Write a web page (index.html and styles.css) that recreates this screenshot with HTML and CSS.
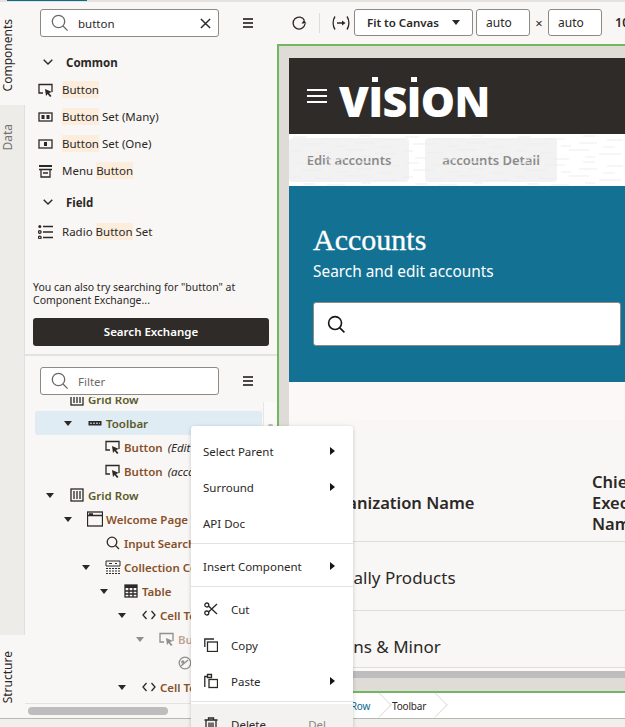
FILE: index.html
```html
<!DOCTYPE html>
<html lang="en">
<head>
  <meta charset="UTF-8">
  <title>Page Designer</title>
  <link rel="stylesheet" href="styles.css">
</head>
<body>
  <div class="app">
    <div class="topline"><div class="topline-blue"></div></div>
    <div class="main">
      <div class="left-panel">
        <div class="side-tabs">
          <div class="tab tab-on tab-components"><span>Components</span></div>
          <div class="tab tab-off tab-data"><span>Data</span></div>
          <div class="tab tab-on tab-structure"><span>Structure</span></div>
        </div>
        <div class="panels">
          <div class="palette">
            <div class="search-row">
              <div class="search-box">
                <svg class="search-icon" width="18" height="18" viewBox="0 0 18 18"><circle cx="7.5" cy="7.5" r="6.2"/><path d="M12 12l4.6 4.6"/></svg>
                <span class="search-text">button</span>
                <svg class="clear-icon" width="11" height="11" viewBox="0 0 12 12"><path d="M1 1l10 10M11 1L1 11"/></svg>
              </div>
              <div class="burger"><i></i><i></i><i></i></div>
            </div>
            <div class="group-head">
              <svg width="10" height="6" viewBox="0 0 10 6"><path d="M.7.7L5 5l4.3-4.3"/></svg>
              <span>Common</span>
            </div>
            <div class="pal-item">
              <svg class="ico" width="16" height="14" viewBox="0 0 16 14"><path d="M5 10H1V1.5h13V9"/><path class="solid" d="M7 6l7 3-3 1 2.5 3-1.5 1-2.3-3L8 13z"/></svg>
              <span><mark>Button</mark></span>
            </div>
            <div class="pal-item">
              <svg class="ico" width="16" height="14" viewBox="0 0 16 14"><rect x="1" y="3" width="13" height="8"/><path class="solid" d="M3.5 5h3v4h-3zM8.500 5h3v4h-3z"/></svg>
              <span><mark>Button</mark> Set (Many)</span>
            </div>
            <div class="pal-item">
              <svg class="ico" width="16" height="14" viewBox="0 0 16 14"><rect x="1" y="3" width="13" height="8"/><path class="solid" d="M6 5h3v4H6z"/></svg>
              <span><mark>Button</mark> Set (One)</span>
            </div>
            <div class="pal-item">
              <svg class="ico" width="16" height="14" viewBox="0 0 16 14"><path class="solid" d="M1 1h13v2H1z"/><path d="M1 5.500h13M3 5.500V13h9V5.500M5 9h5"/></svg>
              <span>Menu <mark>Button</mark></span>
            </div>
            <div class="group-head group-field">
              <svg width="10" height="6" viewBox="0 0 10 6"><path d="M.7.7L5 5l4.3-4.3"/></svg>
              <span>Field</span>
            </div>
            <div class="pal-item">
              <svg class="ico" width="16" height="14" viewBox="0 0 16 14"><path d="M5 1.500h10M5 7h10M5 12.500h10"/><circle class="solid" cx="1.800" cy="1.500" r="1.500"/><circle cx="1.800" cy="7" r="1.300"/><circle cx="1.800" cy="12.500" r="1.300"/></svg>
              <span>Radio <mark>Button</mark> Set</span>
            </div>
            <p class="hint">You can also try searching for "button" at Component Exchange...</p>
            <div class="exchange-btn">Search Exchange</div>
          </div>
          <div class="structure">
            <div class="search-row filter-row">
              <div class="search-box">
                <svg class="search-icon" width="18" height="18" viewBox="0 0 18 18"><circle cx="7.5" cy="7.5" r="6.2"/><path d="M12 12l4.6 4.6"/></svg>
                <span class="search-text placeholder">Filter</span>
              </div>
              <div class="burger"><i></i><i></i><i></i></div>
            </div>
            <div class="tree">
              <div class="node node-cut d0 olive">
                <b class="caret caret-none"></b>
                <div class="slot"><svg class="ico" width="14" height="14" viewBox="0 0 14 14"><rect x="1" y="1" width="12" height="12"/><path d="M4 3v8M7 3v8M10 3v8"/></svg></div>
                <span>Grid Row</span>
              </div>
              <div class="node selected olive">
                <b class="caret"></b>
                <div class="slot"><svg class="ico" width="14" height="14" viewBox="0 0 14 14"><rect class="solid" x="0.500" y="5" width="13" height="4.500"/><path class="dots" d="M2 7.200h10"/></svg></div>
                <span>Toolbar</span>
              </div>
              <div class="node d2 brown">
                <b class="caret caret-none"></b>
                <div class="slot"><svg class="ico" width="16" height="14" viewBox="0 0 16 14"><path d="M5 10H1V1.500h13V9"/><path class="solid" d="M7 6l7 3-3 1 2.500 3-1.500 1-2.300-3L8 13z"/></svg></div>
                <span>Button</span><em>(Edit accounts)</em>
              </div>
              <div class="node d2 brown">
                <b class="caret caret-none"></b>
                <div class="slot"><svg class="ico" width="16" height="14" viewBox="0 0 16 14"><path d="M5 10H1V1.500h13V9"/><path class="solid" d="M7 6l7 3-3 1 2.500 3-1.500 1-2.300-3L8 13z"/></svg></div>
                <span>Button</span><em>(accounts Detail)</em>
              </div>
              <div class="node d0 olive">
                <b class="caret"></b>
                <div class="slot"><svg class="ico" width="14" height="14" viewBox="0 0 14 14"><rect x="1" y="1" width="12" height="12"/><path d="M4 3v8M7 3v8M10 3v8"/></svg></div>
                <span>Grid Row</span>
              </div>
              <div class="node d1 brown">
                <b class="caret"></b>
                <div class="slot"><svg class="ico" width="16" height="16" viewBox="0 0 16 16"><rect x="0.500" y="1" width="15" height="14"/><path d="M.5 4.500h15M2 3h4"/></svg></div>
                <span>Welcome Page Template</span>
              </div>
              <div class="node d2 brown">
                <b class="caret caret-none"></b>
                <div class="slot"><svg class="ico" width="14" height="14" viewBox="0 0 14 14"><circle cx="6" cy="6" r="4.800"/><path d="M9.500 9.500L13 13"/></svg></div>
                <span>Input Search</span>
              </div>
              <div class="node d2 brown">
                <b class="caret"></b>
                <div class="slot"><svg class="ico thin" width="16" height="14" viewBox="0 0 16 14"><path d="M1 1h14v5H1zM4 3.500h3M10 3.500h2"/><path stroke-dasharray="2 1" d="M1 8.500h14M1 11h14M1 13.500h14"/></svg></div>
                <span>Collection Container</span>
              </div>
              <div class="node d3 brown">
                <b class="caret"></b>
                <div class="slot"><svg class="ico" width="14" height="14" viewBox="0 0 14 14"><rect x="1" y="1" width="12" height="12"/><path class="solid" d="M1 1h12v3H1z"/><path d="M1 7h12M1 10h12M5 4v9M9 4v9"/></svg></div>
                <span>Table</span>
              </div>
              <div class="node d4 brown">
                <b class="caret"></b>
                <div class="slot"><svg class="ico" width="14" height="14" viewBox="0 0 14 14"><path d="M4.500 3L1 7l3.500 4M9.500 3L13 7l-3.500 4"/></svg></div>
                <span>Cell Template</span>
              </div>
              <div class="node d5 brown faded">
                <b class="caret"></b>
                <div class="slot"><svg class="ico" width="16" height="14" viewBox="0 0 16 14"><path d="M5 10H1V1.500h13V9"/><path class="solid" d="M7 6l7 3-3 1 2.500 3-1.500 1-2.300-3L8 13z"/></svg></div>
                <span>Button</span>
              </div>
              <div class="node d6 brown faded">
                <b class="caret caret-none"></b>
                <div class="slot"><svg class="ico" width="14" height="14" viewBox="0 0 14 14"><circle cx="7" cy="7" r="5.800"/><circle cx="4.800" cy="6" r="1"/><path d="M3 10l7-6"/></svg></div>
                <span>Icon</span>
              </div>
              <div class="node d4 brown">
                <b class="caret"></b>
                <div class="slot"><svg class="ico" width="14" height="14" viewBox="0 0 14 14"><path d="M4.500 3L1 7l3.500 4M9.500 3L13 7l-3.500 4"/></svg></div>
                <span>Cell Template</span>
              </div>
            </div>
            <div class="tree-vscroll"><div class="tree-vthumb"></div></div>
            <div class="tree-scroll"><div class="tree-thumb"></div></div>
          </div>
        </div>
      </div>
      <div class="right-panel">
        <div class="toolbar">
          <svg class="tool-icon" width="16" height="16" viewBox="0 0 16 16"><path d="M13.500 5.500A6 6 0 1 0 14 9"/><path class="solid" d="M10.500 8.500h5L13 5z"/></svg>
          <div class="tool-sep"></div>
          <svg class="tool-icon" width="18" height="16" viewBox="0 0 18 16"><path d="M3 1.500C.5 5 .5 11 3 14.500M15 1.500c2.500 3.500 2.500 9.500 0 13M5 8h7"/><path class="solid" d="M10 5.500L13.500 8 10 10.500z"/></svg>
          <div class="tool-select">Fit to Canvas <b class="caret"></b></div>
          <div class="tool-input">auto</div>
          <span class="times">×</span>
          <div class="tool-input">auto</div>
          <span class="zoom-value">100%</span>
        </div>
        <div class="canvas">
          <div class="preview">
            <div class="brand-bar">
              <div class="brand-burger"><i></i><i></i><i></i></div>
              <span class="brand-name">V<span class="brand-i">I</span>S<span class="brand-i">I</span>ON</span>
            </div>
            <div class="tabs-strip">
              <span class="tab-btn tab-edit">Edit accounts</span>
              <span class="tab-btn tab-detail">accounts Detail</span>
              <svg class="strip-noise" width="336" height="52">
                <defs>
                  <pattern id="noise" width="112" height="26" patternUnits="userSpaceOnUse">
                    <path d="M4 3h14M32 5h20M70 2h12M94 6h16M12 10h22M48 12h10M66 9h18M90 13h12M2 17h10M26 19h16M56 16h20M86 20h22M14 24h12M38 25h18M72 23h10"/>
                  </pattern>
                </defs>
                <rect width="336" height="52" fill="url(#noise)" stroke="none"/>
              </svg>
            </div>
            <div class="hero">
              <h1>Accounts</h1>
              <p>Search and edit accounts</p>
              <div class="hero-search">
                <svg width="19" height="19" viewBox="0 0 20 20"><circle cx="8.500" cy="8.500" r="6.800"/><path d="M13.500 13.500l4.800 4.800"/></svg>
              </div>
            </div>
            <div class="table">
              <div class="table-row head-row">
                <div class="col-org">Organization Name</div>
                <div class="col-ceo">Chief<br>Executive<br>Name</div>
              </div>
              <div class="table-row body-row"><div class="col-org">McNally Products</div></div>
              <div class="table-row body-row last-row"><div class="col-org">Owens &amp; Minor</div></div>
            </div>
          </div>
          <div class="canvas-scroll"></div>
        </div>
        <div class="crumbs">
          <span class="crumb link">Grid Row</span>
          <span class="crumb">Toolbar</span>
        </div>
      </div>
    </div>
    <div class="bottom-strip"></div>
  </div>
  <div class="menu">
    <div class="menu-item"><span>Select Parent</span><b class="arrow"></b></div>
    <div class="menu-item"><span>Surround</span><b class="arrow"></b></div>
    <div class="menu-item"><span>API Doc</span></div>
    <div class="menu-sep"></div>
    <div class="menu-item"><span>Insert Component</span><b class="arrow"></b></div>
    <div class="menu-sep"></div>
    <div class="menu-item has-icon">
      <svg width="14" height="14" viewBox="0 0 14 14"><circle cx="2.800" cy="3" r="2"/><circle cx="2.800" cy="11" r="2"/><path d="M4.500 4L13 12M4.500 10L13 2"/></svg>
      <span>Cut</span>
    </div>
    <div class="menu-item has-icon">
      <svg width="14" height="14" viewBox="0 0 14 14"><path d="M.8 9V1H10"/><rect x="3.500" y="4" width="10" height="9.500"/></svg>
      <span>Copy</span>
    </div>
    <div class="menu-item has-icon">
      <svg width="14" height="16" viewBox="0 0 14 16"><path d="M.8 14V3.500H3M3.500 1.500h4v3h-4z"/><rect x="5" y="6.500" width="8.500" height="8"/></svg>
      <span>Paste</span><b class="arrow"></b>
    </div>
    <div class="menu-sep menu-sep-last"></div>
    <div class="menu-item has-icon hovered">
      <svg width="14" height="14" viewBox="0 0 14 14"><path d="M.5 3h13M4.500 3V1h5v2M2 3v10.500h10V3M5 5.500v6M7 5.500v6M9 5.500v6"/></svg>
      <span>Delete</span><span class="shortcut">Del</span>
    </div>
  </div>
</body>
</html>
```

FILE: styles.css
```css
html, body {
  margin: 0;
  padding: 0;
  height: 100%;
  overflow: hidden;
}
body {
  font-family: 'Noto Sans', 'Open Sans', sans-serif;
  font-size: 11.5px;
  color: #2b2826;
  background: #f1efec;
  position: relative;
}
svg {
  display: block;
  flex: none;
  fill: none;
  stroke: currentColor;
  stroke-width: 1.3;
}
svg .solid {
  fill: currentColor;
  stroke: none;
}
.app {
  width: 625px;
  height: 727px;
  display: flex;
  flex-direction: column;
  overflow: hidden;
}
.topline {
  height: 2px;
  flex: none;
  background: #e4e2df;
}
.topline-blue {
  width: 80px;
  height: 1px;
  margin-left: 7px;
  background: #0e6a8c;
}
.main {
  flex: 1;
  display: flex;
  min-height: 0;
}
.bottom-strip {
  height: 9px;
  flex: none;
  box-sizing: border-box;
  background: #f1efec;
  border-top: 1px solid #b9b6b2;
}

/* left */
.left-panel {
  width: 277px;
  flex: none;
  display: flex;
}
.side-tabs {
  width: 25px;
  flex: none;
  box-sizing: border-box;
  display: flex;
  flex-direction: column;
  background: #eeece9;
  border-right: 1px solid #e2e0dc;
}
.tab {
  display: flex;
  align-items: center;
  justify-content: flex-start;
  box-sizing: border-box;
  width: 25px;
}
.tab span {
  writing-mode: vertical-rl;
  transform: rotate(180deg);
  font-size: 12px;
  margin-left: -1px;
}
.tab-on {
  background: #f9f7f5;
}
.tab-off {
  color: #75716d;
}
.tab-components {
  height: 103px;
  padding-top: 3px;
}
.tab-data {
  height: 64px;
}
.tab-structure {
  height: 83px;
  margin-top: auto;
  padding-top: 2px;
}
.panels {
  flex: 1;
  display: flex;
  flex-direction: column;
  min-width: 0;
  background: #f9f7f5;
}
.palette {
  height: 354px;
  flex: none;
  box-sizing: border-box;
  border-bottom: 2px solid #e4e2df;
  padding: 7px 8px 0;
}
.search-row {
  display: flex;
  align-items: center;
  padding-left: 7px;
}
.search-box {
  width: 179px;
  height: 28px;
  box-sizing: border-box;
  border: 1px solid #8d8985;
  border-radius: 3px;
  background: #fff;
  display: flex;
  align-items: center;
  padding: 0 7px 0 10px;
}
.search-icon {
  color: #6b6865;
}
.search-text {
  margin-left: 9px;
  flex: 1;
  font-size: 11.5px;
}
.placeholder {
  color: #6f6b67;
}
.clear-icon {
  stroke-width: 1.6;
}
.burger {
  margin-left: 24px;
  width: 10px;
  display: flex;
  flex-direction: column;
  gap: 2px;
}
.burger i {
  display: block;
  height: 2px;
  background: #4b4845;
}
.group-head {
  display: flex;
  align-items: center;
  height: 28px;
  margin-top: 11px;
  padding-left: 10px;
  font-weight: 700;
  font-size: 11.5px;
}
.group-head svg {
  margin-right: 13px;
  stroke-width: 1.4;
}
.group-field {
  margin-top: 4px;
  margin-bottom: 2px;
}
.pal-item {
  display: flex;
  align-items: center;
  height: 27px;
  font-size: 11.5px;
  gap: 8px;
  padding-left: 5px;
}
mark {
  background: #fdeddc;
  color: inherit;
  padding: 1px 0;
}
.hint {
  margin: 36px 0 0;
  line-height: 13px;
  font-size: 10.5px;
}
.exchange-btn {
  margin-top: 11px;
  height: 28px;
  line-height: 28px;
  width: 236px;
  text-align: center;
  background: #2f2b28;
  color: #fff;
  border-radius: 3px;
  font-weight: 600;
  font-size: 11.5px;
}

/* tree */
.structure {
  flex: 1;
  min-height: 0;
  display: flex;
  flex-direction: column;
  position: relative;
  overflow: hidden;
}
.filter-row {
  padding: 11px 0 0 15px;
  margin-bottom: 2px;
}
.tree {
  flex: 1;
  min-height: 0;
  overflow: hidden;
  white-space: nowrap;
}
.node {
  display: flex;
  align-items: center;
  height: 24px;
  font-weight: 600;
  font-size: 11.5px;
}
.node em {
  font-weight: 400;
  margin-left: 5px;
  color: #2b2826;
}
.node-cut {
  margin-top: -10px;
}
.selected {
  background: #dfecf3;
  margin-left: 10px;
  width: 227px;
  padding-left: 29px;
  box-sizing: border-box;
  border-radius: 2px;
}
.olive {
  color: #5b5a28;
}
.brown {
  color: #87512b;
}
.slot {
  width: 21px;
  flex: none;
  display: flex;
  justify-content: center;
  margin-right: 1px;
}
.node .ico {
  color: #2b2826;
}
.ico.thin {
  stroke-width: 1;
}
.ico .dots {
  stroke: #dfecf3;
  stroke-width: 1;
  stroke-dasharray: 2 1;
}
.faded {
  opacity: 0.5;
}
.caret {
  width: 0;
  height: 0;
  display: block;
  flex: none;
  border-left: 4.5px solid transparent;
  border-right: 4.5px solid transparent;
  border-top: 5px solid #2b2826;
}
.node .caret {
  margin-right: 12px;
}
.caret-none {
  visibility: hidden;
}
.d0 {
  padding-left: 21px;
}
.d1 {
  padding-left: 39px;
}
.d2 {
  padding-left: 57px;
}
.d3 {
  padding-left: 75px;
}
.d4 {
  padding-left: 93px;
}
.d5 {
  padding-left: 111px;
}
.d6 {
  padding-left: 129px;
}
.tree-vscroll {
  position: absolute;
  right: 0;
  top: 46px;
  width: 14px;
  height: 100px;
  background: #fbfaf9;
  border-left: 1px solid #e8e6e3;
  box-sizing: border-box;
}
.tree-vthumb {
  width: 5px;
  height: 3px;
  margin: 22px 0 0 4px;
  border-radius: 2px;
  background: #bdbdbd;
}
.tree-scroll {
  height: 15px;
  flex: none;
  border-top: 1px solid #e4e2df;
  padding-top: 3px;
  box-sizing: border-box;
}
.tree-thumb {
  width: 140px;
  height: 8px;
  margin-left: 3px;
  border-radius: 4px;
  background: #bdbdbd;
}

/* right */
.right-panel {
  flex: 1;
  min-width: 0;
  display: flex;
  flex-direction: column;
  overflow: hidden;
}
.toolbar {
  height: 42px;
  flex: none;
  box-sizing: border-box;
  background: #f9f7f5;
  display: flex;
  align-items: center;
  padding: 0 0 1px 14px;
  white-space: nowrap;
}
.tool-sep {
  width: 1px;
  height: 20px;
  flex: none;
  background: #dfddd9;
  margin: 0 12px;
}
.tool-select {
  margin-left: 4px;
  width: 119px;
  height: 27px;
  box-sizing: border-box;
  border: 1px solid #8d8985;
  border-radius: 3px;
  background: #fff;
  display: flex;
  align-items: center;
  justify-content: space-between;
  padding: 0 12px;
  font-weight: 600;
  font-size: 11.5px;
  flex: none;
}
.tool-input {
  width: 54px;
  height: 27px;
  margin-left: 3px;
  flex: none;
  box-sizing: border-box;
  border: 1px solid #8d8985;
  border-radius: 3px;
  background: #fff;
  line-height: 25px;
  padding-left: 9px;
  font-size: 12px;
}
.times {
  width: 18px;
  flex: none;
  text-align: center;
  font-size: 13px;
}
.times + .tool-input {
  margin-left: 0;
}
.zoom-value {
  margin-left: 13px;
  flex: none;
  font-size: 12.5px;
  font-weight: 600;
}
.canvas {
  flex: 1;
  min-height: 0;
  box-sizing: border-box;
  border-style: solid;
  border-color: #72b65f;
  border-width: 2px 0 2px 2px;
  background: #dfdcd7;
  padding: 12px 0 0 10px;
  display: flex;
  flex-direction: column;
  overflow: hidden;
}
.preview {
  flex: 1;
  min-height: 0;
  background: #fbf8f7;
  overflow: hidden;
  display: flex;
  flex-direction: column;
}
.brand-bar {
  height: 76px;
  flex: none;
  background: #2f2b28;
  color: #fff;
  display: flex;
  align-items: center;
  padding-left: 18px;
  gap: 12px;
}
.brand-burger {
  width: 20px;
  display: flex;
  flex-direction: column;
  gap: 4px;
}
.brand-burger i {
  display: block;
  height: 2px;
  background: #fff;
}
.brand-name {
  font-family: 'Open Sans', sans-serif;
  font-weight: 800;
  font-size: 43px;
  line-height: 1;
  letter-spacing: -0.7px;
  margin-top: 8px;
}
.brand-i {
  position: relative;
}
.brand-i::before {
  content: "";
  position: absolute;
  left: 4px;
  right: 4px;
  top: 6px;
  height: 5px;
  background: #fff;
}
.tabs-strip {
  height: 52px;
  flex: none;
  box-sizing: border-box;
  background: #fff;
  display: flex;
  padding-top: 4px;
  font-size: 13px;
  font-weight: 600;
  color: #8b8b8b;
  position: relative;
}
.strip-noise {
  position: absolute;
  left: 0;
  top: 0;
  stroke: #ededed;
  stroke-width: 1;
}
.tab-btn {
  height: 44px;
  background: #f2f2f2;
  border-radius: 4px;
  display: flex;
  align-items: center;
  justify-content: center;
  box-sizing: border-box;
}
.tab-edit {
  width: 120px;
}
.tab-detail {
  width: 132px;
  margin-left: 16px;
}
.hero {
  height: 196px;
  flex: none;
  box-sizing: border-box;
  background: #137294;
  color: #fff;
  padding: 38px 0 0 24px;
}
.hero h1 {
  margin: 0;
  font-family: 'Liberation Serif', serif;
  font-weight: 400;
  font-size: 30px;
  line-height: 32px;
  -webkit-text-stroke: 0.3px #fff;
}
.hero p {
  margin: 6px 0 0;
  font-size: 15.4px;
  line-height: 20px;
}
.hero-search {
  margin-top: 20px;
  width: 308px;
  height: 44px;
  box-sizing: border-box;
  background: #fff;
  border: 1px solid #8d8985;
  border-radius: 3px;
  display: flex;
  align-items: center;
  padding-left: 13px;
  color: #161513;
}
.hero-search svg {
  stroke-width: 1.7;
}
.table {
  background: #f9f7f5;
  margin-top: 38px;
  padding-top: 43px;
  font-size: 17px;
}
.table-row {
  display: flex;
  border-bottom: 1px solid #dfddd9;
  padding-left: 28px;
  white-space: nowrap;
  align-items: center;
  box-sizing: border-box;
}
.head-row {
  height: 79px;
  font-size: 16.5px;
  font-weight: 600;
  line-height: 21px;
}
.body-row {
  height: 69px;
  padding-top: 3px;
}
.last-row {
  height: 57px;
  padding-top: 25px;
  align-items: flex-start;
  line-height: 22px;
}
.col-org {
  width: 275px;
  flex: none;
}
.canvas-scroll {
  height: 7px;
  flex: none;
  background: #bdbdbd;
  margin-bottom: 13px;
}
.crumbs {
  height: 25px;
  flex: none;
  box-sizing: border-box;
  background: #fff;
  display: flex;
  align-items: center;
  font-size: 10px;
  letter-spacing: -0.2px;
  padding-left: 52px;
  overflow: hidden;
}
.crumb {
  padding-right: 22px;
  position: relative;
}
.crumb::after {
  content: "";
  position: absolute;
  right: 4px;
  top: -3px;
  width: 17px;
  height: 17px;
  border-top: 1px solid #e4e2df;
  border-right: 1px solid #e4e2df;
  transform: rotate(45deg);
}
.crumb.link {
  color: #0e6a8c;
}

/* context menu */
.menu {
  position: absolute;
  left: 191px;
  top: 426px;
  width: 162px;
  height: 320px;
  background: #fff;
  border-radius: 3px;
  box-shadow: 0 1px 4px rgba(0, 0, 0, 0.2);
  padding-top: 7px;
  box-sizing: border-box;
}
.menu-item {
  height: 36px;
  display: flex;
  align-items: center;
  padding: 0 18px 0 12px;
  font-size: 11.5px;
  position: relative;
  color: #2b2826;
}
.menu-item .arrow {
  position: absolute;
  right: 18px;
  top: 14px;
  width: 0;
  height: 0;
  border-top: 4px solid transparent;
  border-bottom: 4px solid transparent;
  border-left: 5px solid #161513;
}
.has-icon svg {
  margin: 0 13px 0 1px;
}
.menu-sep {
  height: 1px;
  background: #e4e2df;
  margin: 2px 0 4px;
}
.menu-sep-last {
  margin: 2px 0;
}
.hovered {
  background: #f3f2f0;
  height: 40px;
}
.shortcut {
  margin-left: auto;
  color: #8b8783;
  padding-right: 9px;
}
```
